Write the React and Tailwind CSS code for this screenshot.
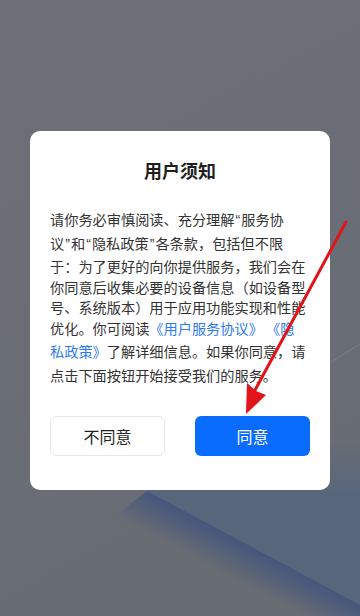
const Q = ({ children }) => <span className="font-['Liberation_Sans'] px-[1px]">{children}</span>;

const lines = [
  { h: 'h-[24px]', content: <>请你务必审慎阅读、充分理解<Q>“</Q>服务协</> },
  { h: 'h-[24px]', content: <>议<Q>”</Q>和<Q>“</Q>隐私政策<Q>”</Q>各条款，包括但不限</> },
  { h: 'h-[22px]', content: <>于：为了更好的向你提供服务，我们会在</> },
  { h: 'h-[20px]', content: <>你同意后收集必要的设备信息（如设备型</> },
  { h: 'h-[20px]', content: <>号、系统版本）用于应用功能实现和性能</> },
  { h: 'h-[22px]', content: <>优化。你可阅读<span className="text-[#2e7bf0]">《用户服务协议》 《隐</span></> },
  { h: 'h-[24px]', content: <><span className="text-[#2e7bf0]">私政策》</span>了解详细信息。如果你同意，请</> },
  { h: 'h-[24px]', content: <>点击下面按钮开始接受我们的服务。</> },
];

function Wallpaper() {
  return (
    <svg className="absolute inset-0" width="360" height="616" viewBox="0 0 360 616">
      <defs>
        <linearGradient id="bg" x1="0" y1="0" x2="0.3" y2="1">
          <stop offset="0" stopColor="#6c6f78" />
          <stop offset="1" stopColor="#686c73" />
        </linearGradient>
        <linearGradient id="edge" gradientUnits="userSpaceOnUse" x1="253" y1="548" x2="236" y2="580">
          <stop offset="0" stopColor="#43567d" stopOpacity="0.95" />
          <stop offset="1" stopColor="#43567d" stopOpacity="0" />
        </linearGradient>
        <linearGradient id="top" gradientUnits="userSpaceOnUse" x1="300" y1="440" x2="300" y2="500">
          <stop offset="0" stopColor="#57667b" stopOpacity="0" />
          <stop offset="1" stopColor="#57667b" stopOpacity="1" />
        </linearGradient>
      </defs>
      <rect width="360" height="616" fill="url(#bg)" />
      <polygon points="147,491 147,470 360,440 360,605" fill="url(#top)" />
      <polygon points="147,491 300,491 360,491 360,605" fill="#57667b" />
      <polygon points="147,491 360,605 360,660 110,520" fill="url(#edge)" />
      <line x1="331" y1="362" x2="360" y2="344" stroke="#8a94a3" strokeWidth="0.8" opacity="0.6" />
    </svg>
  );
}

export default function App() {
  return (
    <div
      className="relative w-[360px] h-[616px] overflow-hidden flex flex-col items-center pt-[131px] bg-[#6b6e77]"
      style={{ fontFamily: '"Noto Sans CJK SC", "Noto Sans", sans-serif' }}
    >
      <Wallpaper />
      <div className="relative w-[300px] bg-white rounded-[10px] pt-[27px] pb-[34px] px-5">
        <h1 className="text-center text-[18px] leading-6 font-bold text-[#1f1f1f] mb-[26px]">用户须知</h1>
        <div className="text-[14.2px] text-[#333333] [text-spacing-trim:space-all]">
          {lines.map((l, i) => (
            <div key={i} className={`${l.h} flex items-center whitespace-nowrap`}>
              <span>{l.content}</span>
            </div>
          ))}
        </div>
        <div className="flex justify-between mt-[28px]">
          <button className="w-[115px] h-10 rounded-md border border-[#e6e6e6] bg-white text-[16px] text-[#222]">
            不同意
          </button>
          <button className="w-[115px] h-10 rounded-md bg-[#0a6cfe] text-[16px] text-white">
            同意
          </button>
        </div>
      </div>
      <svg className="absolute inset-0 pointer-events-none" width="360" height="616" viewBox="0 0 360 616">
        <line x1="346" y1="222" x2="254" y2="392" stroke="#e0141a" strokeWidth="3" strokeLinecap="round" />
        <polygon points="246,414 247,383 256,391 266,395" fill="#e0141a" />
      </svg>
    </div>
  );
}
